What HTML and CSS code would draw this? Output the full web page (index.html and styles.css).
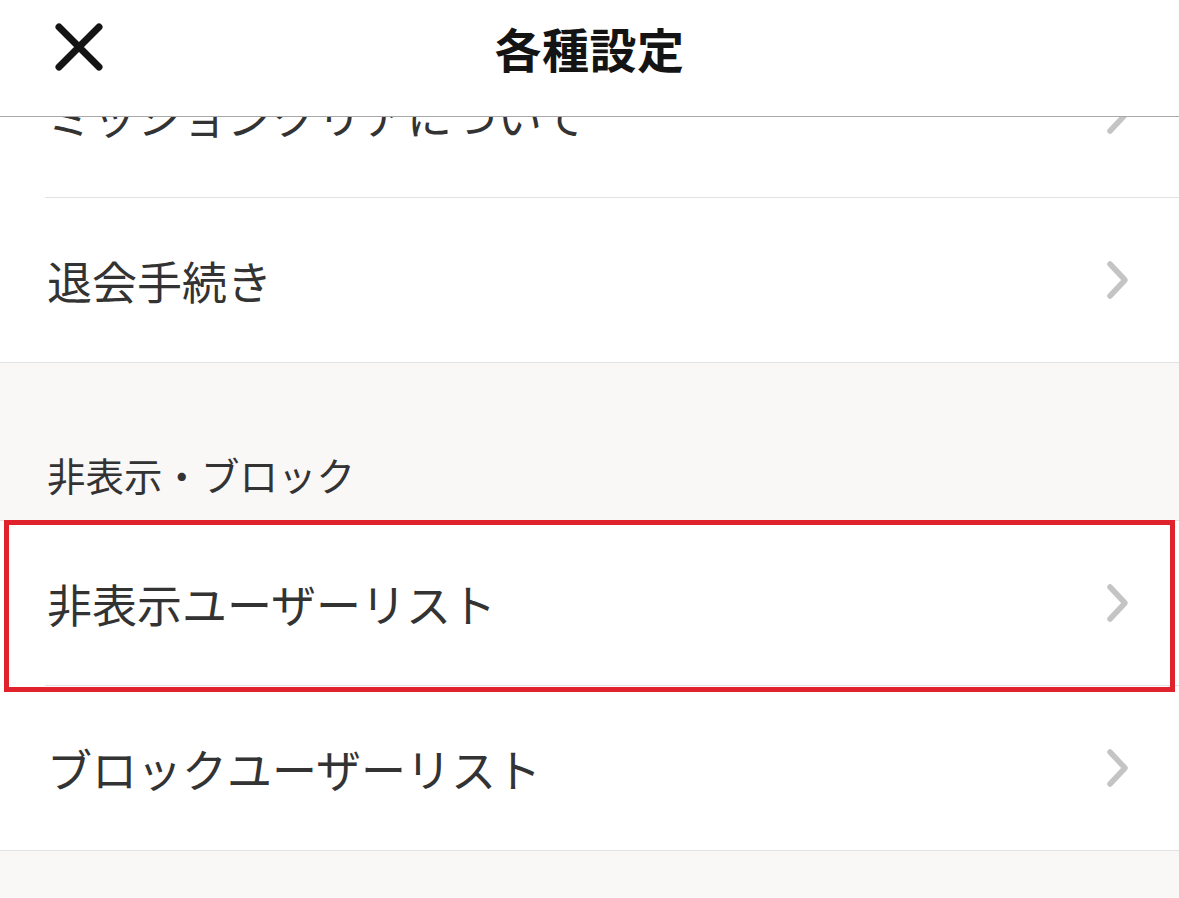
FILE: index.html
```html
<!DOCTYPE html>
<html lang="ja">
<head>
  <meta charset="UTF-8">
  <meta name="viewport" content="width=device-width, initial-scale=1.0">
  <title>各種設定</title>
  <link rel="stylesheet" href="styles.css">
</head>
<body>
  <header class="topbar">
    <button class="close-btn" aria-label="閉じる">
      <svg width="48" height="48" viewBox="0 0 48 48">
        <path d="M4 4 L44 44 M44 4 L4 44" stroke="#141414" stroke-width="7" stroke-linecap="round" fill="none"/>
      </svg>
    </button>
    <h1 class="title">各種設定</h1>
    <span></span>
  </header>

  <main class="content">
    <div class="group first">
      <a class="row" href="#">
        <span>ミッションクリアについて</span>
        <svg class="chevron" width="24" height="40" viewBox="0 0 24 40">
          <polyline points="4,4 19,20 4,36" />
        </svg>
      </a>
      <a class="row" href="#">
        <span>退会手続き</span>
        <svg class="chevron" width="24" height="40" viewBox="0 0 24 40">
          <polyline points="4,4 19,20 4,36" />
        </svg>
      </a>
    </div>

    <div class="section-label">非表示・ブロック</div>

    <div class="group">
      <a class="row marked" href="#">
        <span>非表示ユーザーリスト</span>
        <svg class="chevron" width="24" height="40" viewBox="0 0 24 40">
          <polyline points="4,4 19,20 4,36" />
        </svg>
      </a>
      <a class="row" href="#">
        <span>ブロックユーザーリスト</span>
        <svg class="chevron" width="24" height="40" viewBox="0 0 24 40">
          <polyline points="4,4 19,20 4,36" />
        </svg>
      </a>
    </div>
  </main>
</body>
</html>
```

FILE: styles.css
```css
:root {
  --text-color: #333333;
  --title-color: #141414;
  --line-color: #e2e2e2;
  --header-line: #a9a9a9;
  --section-bg: #f9f8f6;
  --chevron-color: #c4c4c4;
  --mark-color: #e0222c;
}

* {
  box-sizing: border-box;
}

html, body {
  height: 100%;
}

body {
  margin: 0;
  font-family: "Noto Sans CJK JP", "Noto Sans", sans-serif;
  background: var(--section-bg);
  color: var(--text-color);
  display: flex;
  flex-direction: column;
  overflow: hidden;
}

.topbar {
  height: 117px;
  flex-shrink: 0;
  display: grid;
  grid-template-columns: 1fr auto 1fr;
  align-items: center;
  padding: 0 55px 22px;
  background: #fff;
  border-bottom: 1px solid var(--header-line);
  position: relative;
  z-index: 2;
}

.close-btn {
  width: 48px;
  height: 48px;
  padding: 0;
  border: none;
  background: none;
  display: flex;
}

.title {
  margin: 0;
  font-size: 47px;
  font-weight: 700;
  line-height: 1;
  color: var(--title-color);
  letter-spacing: 0.5px;
}

.content {
  flex: 1;
  overflow: hidden;
}

.group {
  background: #fff;
  border-top: 1px solid var(--line-color);
  border-bottom: 1px solid var(--line-color);
}

.group.first {
  border-top: none;
  margin-top: -84px;
}

.row {
  display: flex;
  align-items: center;
  justify-content: space-between;
  height: 165px;
  margin-left: 45px;
  padding: 0 49px 0 2px;
  border-bottom: 1px solid var(--line-color);
  font-size: 45px;
  line-height: 1;
  color: var(--text-color);
  text-decoration: none;
  position: relative;
}

.row:last-child {
  height: 164px;
  border-bottom: none;
}

.chevron polyline {
  fill: none;
  stroke: var(--chevron-color);
  stroke-width: 5.5;
  stroke-linecap: round;
  stroke-linejoin: round;
}

/* red frame drawn over the row */
.row.marked::after {
  content: '';
  position: absolute;
  left: -41px;
  right: 4px;
  top: -1px;
  bottom: -7px;
  border: 5px solid var(--mark-color);
  pointer-events: none;
}

.section-label {
  padding: 89px 0 24px 47px;
  font-size: 38.5px;
  line-height: 44px;
  color: var(--text-color);
}
```
